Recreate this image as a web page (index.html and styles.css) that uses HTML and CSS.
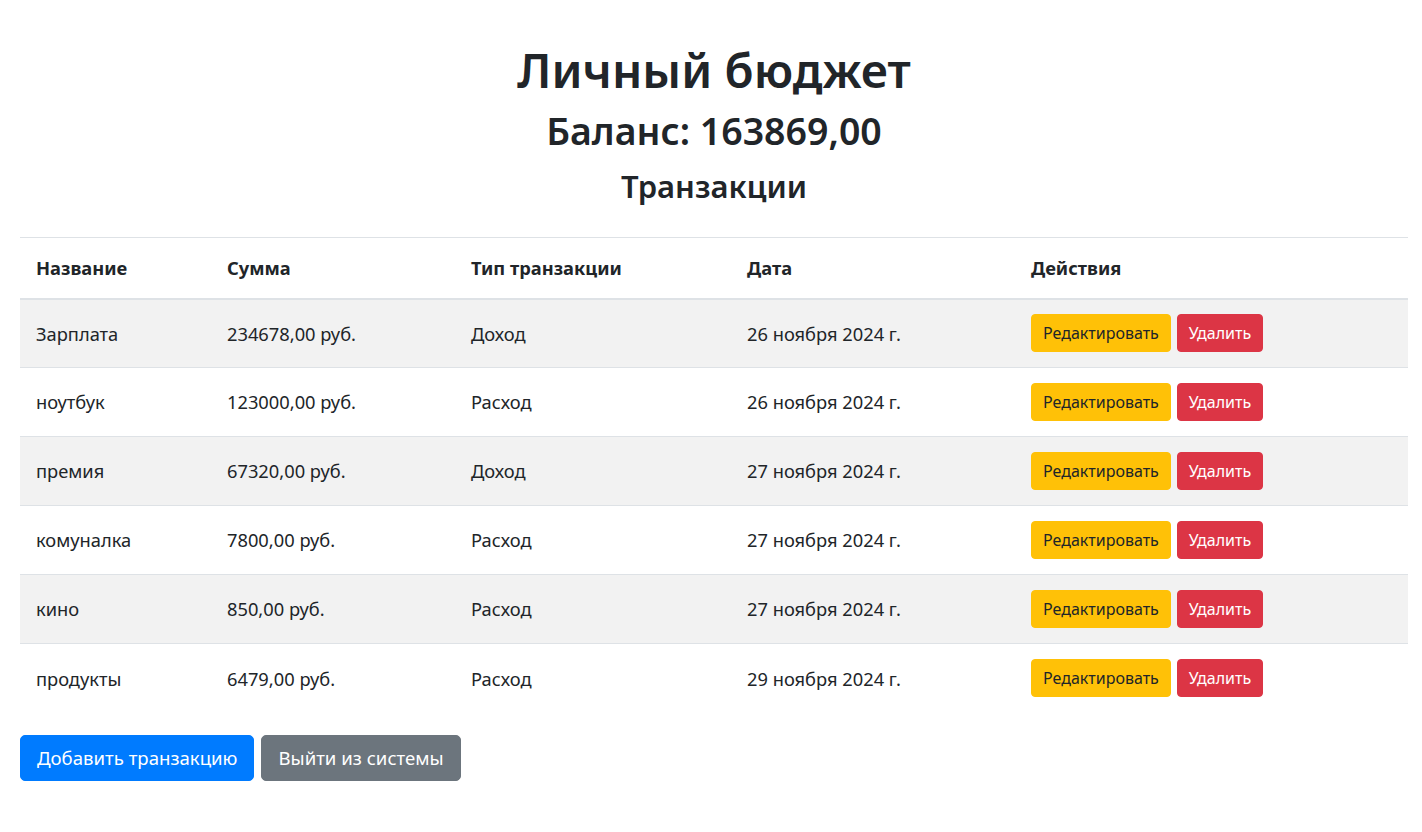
FILE: index.html
```html
<!DOCTYPE html>
<html lang="ru">
<head>
<meta charset="utf-8">
<title>Личный бюджет</title>
<link rel="stylesheet" href="styles.css">
</head>
<body>
<div class="page">
  <h1 class="title">Личный бюджет</h1>
  <h2 class="balance">Баланс: 163869,00</h2>
  <h3 class="subtitle">Транзакции</h3>
  <table class="tx-table">
    <colgroup>
      <col class="c1"><col class="c2"><col class="c3"><col class="c4"><col class="c5">
    </colgroup>
    <thead>
      <tr><th>Название</th><th>Сумма</th><th>Тип транзакции</th><th>Дата</th><th>Действия</th></tr>
    </thead>
    <tbody>
      <tr><td>Зарплата</td><td>234678,00 руб.</td><td>Доход</td><td>26 ноября 2024 г.</td><td><a class="btn btn-warning">Редактировать</a><a class="btn btn-danger">Удалить</a></td></tr>
      <tr><td>ноутбук</td><td>123000,00 руб.</td><td>Расход</td><td>26 ноября 2024 г.</td><td><a class="btn btn-warning">Редактировать</a><a class="btn btn-danger">Удалить</a></td></tr>
      <tr><td>премия</td><td>67320,00 руб.</td><td>Доход</td><td>27 ноября 2024 г.</td><td><a class="btn btn-warning">Редактировать</a><a class="btn btn-danger">Удалить</a></td></tr>
      <tr><td>комуналка</td><td>7800,00 руб.</td><td>Расход</td><td>27 ноября 2024 г.</td><td><a class="btn btn-warning">Редактировать</a><a class="btn btn-danger">Удалить</a></td></tr>
      <tr><td>кино</td><td>850,00 руб.</td><td>Расход</td><td>27 ноября 2024 г.</td><td><a class="btn btn-warning">Редактировать</a><a class="btn btn-danger">Удалить</a></td></tr>
      <tr><td>продукты</td><td>6479,00 руб.</td><td>Расход</td><td>29 ноября 2024 г.</td><td><a class="btn btn-warning">Редактировать</a><a class="btn btn-danger">Удалить</a></td></tr>
    </tbody>
  </table>
  <div class="actions">
    <a class="btn btn-big btn-primary">Добавить транзакцию</a>
    <a class="btn btn-big btn-secondary">Выйти из системы</a>
  </div>
</div>
</body>
</html>
```

FILE: styles.css
```css
* { box-sizing: border-box; }
body {
  margin: 0;
  font-family: "Segoe UI", "Noto Sans", "Open Sans", sans-serif;
  font-size: 16px;
  line-height: 1.5;
  color: #212529;
  background: #fff;
}
.page {
  padding: 0 14px 0 20px;
}
.title, .balance, .subtitle {
  text-align: center;
  font-weight: 600;
  margin: 0;
}
.title {
  font-size: 47.5px;
  line-height: 58px;
  padding-top: 41px;
}
.balance {
  font-size: 37.5px;
  line-height: 46px;
  margin-top: 9px;
}
.subtitle {
  font-size: 31px;
  line-height: 40px;
  margin-top: 12px;
  margin-bottom: 31px;
}
.tx-table {
  width: 100%;
  border-collapse: collapse;
  table-layout: fixed;
  font-size: 18.3px;
}
.c1 { width: 191px; }
.c2 { width: 244px; }
.c3 { width: 276px; }
.c4 { width: 284px; }
.tx-table th {
  text-align: left;
  font-weight: 700;
  padding: 0 16px;
  height: 61px;
  border-top: 1px solid #dee2e6;
  border-bottom: 2px solid #dee2e6;
  vertical-align: middle;
}
.tx-table td {
  padding: 0 16px;
  height: 69px;
  border-top: 1px solid #dee2e6;
  vertical-align: middle;
}
.tx-table tbody tr:nth-child(odd) {
  background: #f2f2f2;
}
.tx-table tbody tr:first-child td { border-top: 0; }
.btn {
  display: inline-block;
  font-size: 16px;
  line-height: 24px;
  padding: 6px 12px;
  border: 1px solid transparent;
  border-radius: 4px;
  vertical-align: middle;
  white-space: nowrap;
  text-decoration: none;
}
.tx-table .btn { padding: 6px 11px; }
.btn + .btn { margin-left: 6px; }
.btn-warning { background: #ffc107; border-color: #ffc107; color: #212529; }
.btn-danger { background: #dc3545; border-color: #dc3545; color: #fff; }
.btn-primary { background: #007bff; border-color: #007bff; color: #fff; }
.btn-secondary { background: #6c757d; border-color: #6c757d; color: #fff; }
.actions {
  margin-top: 22px;
  display: flex;
  gap: 7px;
}
.actions .btn + .btn { margin-left: 0; }
.btn-big {
  font-size: 18.6px;
  line-height: 28px;
  padding: 8px 16px;
  border-radius: 5px;
}
```
